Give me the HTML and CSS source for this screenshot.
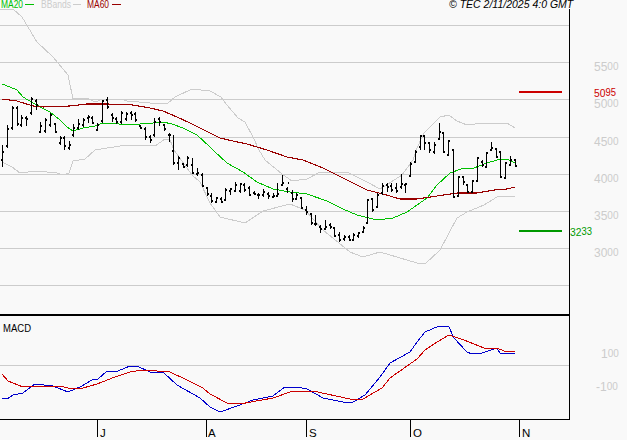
FILE: index.html
```html
<!DOCTYPE html>
<html lang="en">
<head>
<meta charset="utf-8">
<title>TEC chart</title>
<link rel="stylesheet" href="styles.css">
</head>
<body>
<svg class="chart" width="627" height="440" viewBox="0 0 627 440">
  <path class="grid" d="M0 25.5H569M0 62.5H569M0 99.5H569M0 137.5H569M0 174.5H569M0 211.5H569M0 248.5H569M0 285.5H569M0 365.5H569"/>

  <polyline class="band" points="0,9 13,9 22,17 28,27 37,42 53,57 68,75 73,99 87,98 95,102 103,99 122,99 127,101 150,103 167,104 175,97 192,89 210,91 221,97 227,105 238,118 245,122 253,137 259,150 265,160 282,174 292,181 307,179 320,172 347,172 367,182 380,189 402,175 413,160 417,148 424,133 440,117 449,115 457,121 467,125 484,123 507,123 515,128"/>
  <polyline class="band" points="2,162 12,167 20,173 37,171 57,173 63,175 69,173 73,161 85,159 95,150 120,146 137,145 155,146 165,139 170,140 174,150 192,175 200,182 210,203 220,217 245,223 263,211 290,204 305,210 323,230 350,252 363,257 380,252 417,263 425,264 440,250 457,218 467,212 484,205 497,197 515,196"/>

  <polyline class="ma20" points="2,84 10,87 17,90 23,97 33,103 42,108 50,112 60,120 67,127 73,131 83,128 95,126 102,123 115,123 123,125 140,124 153,123 163,122 172,124 183,128 197,135 210,147 213,150 227,163 243,172 257,182 273,189 290,192 307,194 327,201 343,209 357,215 377,220 393,218 407,212 417,205 427,198 437,185 450,173 464,168 474,168 487,163 497,160 507,159 515,163"/>
  <polyline class="ma60" points="2,99 17,101 33,106 43,107 70,106 87,104 107,104 133,105 150,108 163,111 177,117 190,123 210,133 220,138 233,141 247,144 267,150 287,157 303,160 323,168 343,178 367,190 383,194 400,199 417,199 437,196 457,193 477,193 494,190 507,189 515,187"/>

  <path class="bars" d="M2.5 145V167M1 160h1.5M2.5 152h1.5M7.5 125V148M6 146h1.5M7.5 129h1.5M12.5 106V130M11 128h1.5M12.5 108h1.5M17.5 106V126M16 108h1.5M17.5 124h1.5M21.5 115V127M20 125h1.5M21.5 118h1.5M26.5 116V126M25 118h1.5M26.5 119h1.5M31.5 97V115M30 113h1.5M31.5 99h1.5M36.5 99V110M35 101h1.5M36.5 105h1.5M40.5 122V133M39 132h1.5M40.5 126h1.5M45.5 118V133M44 131h1.5M45.5 120h1.5M50.5 113V127M49 125h1.5M50.5 115h1.5M55.5 123V133M54 124h1.5M55.5 132h1.5M60.5 136V145M59 143h1.5M60.5 138h1.5M64.5 136V150M63 138h1.5M64.5 146h1.5M69.5 141V150M68 148h1.5M69.5 145h1.5M73.5 124V137M72 135h1.5M73.5 128h1.5M78.5 119V130M77 128h1.5M78.5 124h1.5M83.5 118V127M82 125h1.5M83.5 120h1.5M88.5 115V123M87 118h1.5M88.5 117h1.5M92.5 116V124M91 118h1.5M92.5 123h1.5M97.5 123V131M96 130h1.5M97.5 125h1.5M102.5 100V123M101 121h1.5M102.5 101h1.5M107.5 97V109M106 100h1.5M107.5 107h1.5M112.5 113V122M111 115h1.5M112.5 118h1.5M116.5 117V124M115 119h1.5M116.5 122h1.5M121.5 111V124M120 122h1.5M121.5 113h1.5M126.5 112V121M125 119h1.5M126.5 114h1.5M131.5 111V120M130 113h1.5M131.5 115h1.5M135.5 112V122M134 114h1.5M135.5 120h1.5M140.5 125V129M139 126h1.5M140.5 128h1.5M145.5 127V140M144 129h1.5M145.5 137h1.5M150.5 135V143M149 137h1.5M150.5 140h1.5M154.5 118V137M153 135h1.5M154.5 122h1.5M159.5 117V126M158 119h1.5M159.5 122h1.5M164.5 124V131M163 125h1.5M164.5 129h1.5M169.5 133V142M168 135h1.5M169.5 135h1.5M173.5 135V165M172 151h1.5M173.5 163h1.5M178.5 156V170M177 163h1.5M178.5 158h1.5M183.5 163V168M182 164h1.5M183.5 167h1.5M187.5 156V167M186 165h1.5M187.5 158h1.5M192.5 158V174M191 165h1.5M192.5 173h1.5M197.5 168V176M196 174h1.5M197.5 173h1.5M202.5 173V187M201 175h1.5M202.5 186h1.5M207.5 187V196M206 188h1.5M207.5 194h1.5M211.5 193V203M210 196h1.5M211.5 201h1.5M216.5 197V203M215 202h1.5M216.5 198h1.5M221.5 197V203M220 199h1.5M221.5 202h1.5M225.5 188V201M224 200h1.5M225.5 190h1.5M230.5 188V195M229 191h1.5M230.5 189h1.5M235.5 182V192M234 191h1.5M235.5 185h1.5M240.5 183V193M239 191h1.5M240.5 184h1.5M244.5 183V192M243 185h1.5M244.5 190h1.5M249.5 186V196M248 188h1.5M249.5 195h1.5M254.5 191V195M253 193h1.5M254.5 194h1.5M258.5 193V199M257 195h1.5M258.5 195h1.5M263.5 189V197M262 195h1.5M263.5 192h1.5M268.5 192V199M267 194h1.5M268.5 196h1.5M273.5 193V198M272 197h1.5M273.5 196h1.5M277.5 183V197M276 196h1.5M277.5 194h1.5M282.5 175V186M281 185h1.5M282.5 183h1.5M287.5 187V193M286 189h1.5M287.5 183h1.5M292.5 190V202M291 193h1.5M292.5 199h1.5M296.5 193V200M295 199h1.5M296.5 195h1.5M301.5 197V209M300 198h1.5M301.5 208h1.5M306.5 206V215M305 210h1.5M306.5 212h1.5M311.5 213V225M310 214h1.5M311.5 223h1.5M315.5 215V226M314 224h1.5M315.5 224h1.5M320.5 225V233M319 227h1.5M320.5 229h1.5M325.5 220V230M324 229h1.5M325.5 227h1.5M330.5 223V229M329 225h1.5M330.5 227h1.5M334.5 227V237M333 228h1.5M334.5 236h1.5M339.5 232V242M338 235h1.5M339.5 240h1.5M344.5 235V241M343 239h1.5M344.5 237h1.5M349.5 235V241M348 237h1.5M349.5 240h1.5M353.5 233V241M352 240h1.5M353.5 235h1.5M358.5 232V238M357 236h1.5M358.5 233h1.5M363.5 226V233M362 232h1.5M363.5 228h1.5M367.5 199V224M366 223h1.5M367.5 200h1.5M372.5 198V212M371 199h1.5M372.5 210h1.5M377.5 193V208M376 207h1.5M377.5 195h1.5M382.5 183V195M381 193h1.5M382.5 186h1.5M387.5 183V192M386 185h1.5M387.5 187h1.5M391.5 183V192M390 186h1.5M391.5 190h1.5M396.5 183V193M395 188h1.5M396.5 191h1.5M401.5 174V189M400 187h1.5M401.5 184h1.5M405.5 183V193M404 185h1.5M405.5 184h1.5M410.5 162V177M409 176h1.5M410.5 164h1.5M415.5 150V163M414 162h1.5M415.5 152h1.5M420.5 135V150M419 147h1.5M420.5 136h1.5M424.5 135V150M423 136h1.5M424.5 143h1.5M429.5 142V153M428 143h1.5M429.5 150h1.5M434.5 142V154M433 152h1.5M434.5 145h1.5M439.5 123V139M438 139h1.5M439.5 132h1.5M443.5 132V153M442 133h1.5M443.5 152h1.5M448.5 140V156M447 155h1.5M448.5 141h1.5M453.5 149V198M452 150h1.5M453.5 197h1.5M458.5 176V197M457 196h1.5M458.5 177h1.5M463.5 176V185M462 177h1.5M463.5 182h1.5M467.5 184V193M466 185h1.5M467.5 192h1.5M472.5 180V193M471 192h1.5M472.5 181h1.5M477.5 157V182M476 181h1.5M477.5 158h1.5M482.5 160V167M481 162h1.5M482.5 165h1.5M486.5 152V168M485 167h1.5M486.5 153h1.5M491.5 142V151M490 150h1.5M491.5 148h1.5M496.5 148V158M495 149h1.5M496.5 157h1.5M500.5 151V178M499 152h1.5M500.5 177h1.5M505.5 162V179M504 178h1.5M505.5 163h1.5M510.5 156V166M509 165h1.5M510.5 160h1.5M515.5 159V167M514 160h1.5M515.5 166h1.5"/>

  <path class="ma20-stroke" d="M25 4.5H34"/>
  <path class="band-stroke" d="M73 4.5H81"/>
  <path class="ma60-stroke" d="M112 4.5H121"/>

  <text class="t-ma20" x="1" y="8" textLength="22" lengthAdjust="spacingAndGlyphs">MA20</text>
  <text class="t-band" x="41" y="8" textLength="30" lengthAdjust="spacingAndGlyphs">BBands</text>
  <text class="t-ma60" x="87" y="8" textLength="22" lengthAdjust="spacingAndGlyphs">MA60</text>
  <text class="t-copy" x="449" y="8">© TEC 2/11/2025 4:0 GMT</text>

  <path class="axis" d="M569.5 9V419.5H0"/>
  <path class="divider" d="M0 315H569"/>
  <path class="ticks" d="M97.5 419V437M206.5 419V437M306.5 419V437M410.5 419V437M519.5 419V437"/>

  <path class="hi" d="M519 91.5H562"/>
  <path class="lo" d="M519 231H562"/>

  <polyline class="macd" points="2,398 7,399 13,395 23,393 35,384 53,386 68,392 80,387 92,380 98,379 107,371 118,371 130,366 137,366 150,372 163,372 177,385 200,398 210,407 220,412 237,406 253,400 273,396 285,387 297,387 307,389 323,398 343,402 353,402 365,395 380,377 390,363 410,352 417,342 425,332 439,326 449,327 454,338 467,352 472,354 482,353 497,348 500,353 510,353 515,354"/>
  <polyline class="signal" points="2,374 8,381 23,387 33,386 60,386 68,388 83,388 97,384 115,377 130,372 143,370 170,372 187,380 203,388 210,394 227,403 240,404 273,398 293,391 313,391 350,399 363,399 382,388 390,378 417,359 425,350 437,342 449,335 464,340 484,348 497,348 504,351 515,352"/>

  <text class="lbl" x="594" y="71">55<tspan class="sm" dy="-1">00</tspan></text>
  <text class="lbl" x="594" y="108">50<tspan class="sm" dy="-1">00</tspan></text>
  <text class="lbl" x="594" y="146">45<tspan class="sm" dy="-1">00</tspan></text>
  <text class="lbl" x="594" y="183">40<tspan class="sm" dy="-1">00</tspan></text>
  <text class="lbl" x="594" y="220">35<tspan class="sm" dy="-1">00</tspan></text>
  <text class="lbl" x="594" y="257">30<tspan class="sm" dy="-1">00</tspan></text>
  <text class="lbl" x="601" y="358">1<tspan class="sm" dy="-1">00</tspan></text>
  <text class="lbl" x="596" y="391">-1<tspan class="sm" dy="-1">00</tspan></text>
  <text class="lbl-hi" x="594" y="97" textLength="22" lengthAdjust="spacingAndGlyphs">50<tspan class="sm-pair" dy="-1">95</tspan></text>
  <text class="lbl-lo" x="570" y="236" textLength="22" lengthAdjust="spacingAndGlyphs">32<tspan class="sm-pair" dy="-1">33</tspan></text>

  <text class="t-macd" x="3" y="332" textLength="28" lengthAdjust="spacingAndGlyphs">MACD</text>
  <text class="t-month" x="100" y="437">J</text>
  <text class="t-month" x="208" y="437">A</text>
  <text class="t-month" x="309" y="437">S</text>
  <text class="t-month" x="413" y="437">O</text>
  <text class="t-month" x="522" y="437">N</text>
</svg>
</body>
</html>
```
FILE: styles.css
```css
html, body {
  margin: 0;
  padding: 0;
  background: #f9f9f9;
}
.chart {
  display: block;
  font-family: "Liberation Sans", Arial, sans-serif;
}
.chart polyline, .chart path {
  fill: none;
  shape-rendering: crispEdges;
}
.grid { stroke: #cccccc; stroke-width: 1; }
.band { stroke: #cccccc; stroke-width: 1; }
.ma20 { stroke: #00c000; stroke-width: 1; }
.ma60 { stroke: #990000; stroke-width: 1.1; }
.bars { stroke: #000000; stroke-width: 1.5; }
.ma20-stroke { stroke: #00c000; stroke-width: 1; }
.band-stroke { stroke: #cccccc; stroke-width: 1; }
.ma60-stroke { stroke: #990000; stroke-width: 1; }
.axis { stroke: #000000; stroke-width: 1; }
.divider { stroke: #000000; stroke-width: 2; }
.ticks { stroke: #000000; stroke-width: 1; }
.hi { stroke: #cc0000; stroke-width: 2; }
.lo { stroke: #009900; stroke-width: 2; }
.macd { stroke: #0000cc; stroke-width: 1; }
.signal { stroke: #cc0000; stroke-width: 1; }
.t-ma20 { fill: #00c000; font-size: 11px; }
.t-band { fill: #cccccc; font-size: 11px; }
.t-ma60 { fill: #990000; font-size: 11px; }
.t-copy { fill: #000000; font-size: 10.5px; font-style: italic; }
.lbl { fill: #cccccc; font-size: 12px; }
.lbl-hi { fill: #cc0000; font-size: 11.5px; }
.lbl-lo { fill: #009900; font-size: 11.5px; }
.sm { font-size: 10px; }
.sm-pair { font-size: 10.5px; }
.t-macd { fill: #000000; font-size: 10px; }
.t-month { fill: #000000; font-size: 11.5px; }
```
